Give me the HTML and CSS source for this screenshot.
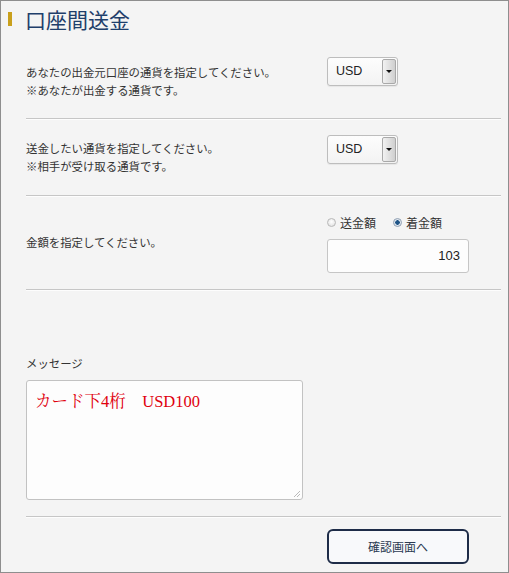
FILE: index.html
```html
<!DOCTYPE html>
<html lang="ja">
<head>
<meta charset="utf-8">
<title>口座間送金</title>
<link rel="stylesheet" href="styles.css">
</head>
<body>
<div class="page">
  <h1 class="title">口座間送金</h1>
  <div class="content">
    <section class="row row-from">
      <div class="label">あなたの出金元口座の通貨を指定してください。<br>※あなたが出金する通貨です。</div>
      <div class="select"><span class="select-value">USD</span><span class="select-arrow"><span class="tri"></span></span></div>
    </section>
    <section class="row row-to">
      <div class="label">送金したい通貨を指定してください。<br>※相手が受け取る通貨です。</div>
      <div class="select"><span class="select-value">USD</span><span class="select-arrow"><span class="tri"></span></span></div>
    </section>
    <section class="row row-amount">
      <div class="label">金額を指定してください。</div>
      <div class="amount">
        <div class="radios">
          <span class="radio"><span class="radio-dot"></span>送金額</span>
          <span class="radio"><span class="radio-dot is-checked"></span>着金額</span>
        </div>
        <div class="amount-input">103</div>
      </div>
    </section>
    <section class="row row-message">
      <div class="message-label">メッセージ</div>
      <div class="textarea">カード下4桁　USD100<span class="grip"></span></div>
    </section>
    <div class="actions">
      <button class="btn" type="button">確認画面へ</button>
    </div>
  </div>
</div>
</body>
</html>
```
FILE: styles.css
```css
* { box-sizing: border-box; }
html, body { margin: 0; padding: 0; }
body { background: #f4f4f4; }

.page {
  width: 509px;
  height: 573px;
  border: 1px solid #8e8e8e;
  background: #f4f4f4;
  font-family: "Noto Sans CJK JP", "Noto Sans", sans-serif;
  font-size: 11.4px;
  color: #333;
  overflow: hidden;
}

.title {
  display: flex;
  align-items: center;
  height: 39px;
  margin: 0;
  padding-bottom: 4px;
  font-size: 21px;
  font-weight: normal;
  color: #1f3f6b;
  line-height: 24px;
}
.title::before {
  content: "";
  width: 4px;
  height: 14px;
  margin: 0 13px 0 7px;
  background: #c9a01c;
}

.content {
  padding: 0 7px 0 25px;
}

.row {
  display: flex;
  align-items: flex-start;
  border-bottom: 1px solid #c6c6c6;
  box-shadow: 0 1px 0 #fdfdfd;
}
.label {
  width: 301px;
  line-height: 18px;
}

.row-from { height: 79px; padding-top: 17px; }
.row-from .label { margin-top: 6px; }
.row-to { height: 77px; padding-top: 16px; }
.row-to .label { margin-top: 4px; }

.select {
  display: flex;
  width: 71px;
  height: 29px;
  border: 1px solid #bdbdbd;
  border-radius: 3px;
  background: linear-gradient(#fdfdfd, #f3f3f3);
  box-shadow: 0 1px 1px rgba(0,0,0,0.06);
}
.select-value {
  flex: 1;
  padding-left: 8px;
  font-family: "Liberation Sans", sans-serif;
  font-size: 12.5px;
  line-height: 27px;
  color: #222;
}
.select-arrow {
  display: flex;
  align-items: center;
  justify-content: center;
  width: 14px;
  margin: 1px 1px 1px 0;
  border: 1px solid #a9a9a9;
  border-radius: 2px;
  background: linear-gradient(to right, #f2f2f2, #cfcfcf);
}
.tri {
  width: 0;
  height: 0;
  border-left: 3px solid transparent;
  border-right: 3px solid transparent;
  border-top: 3px solid #111;
}

.row-amount { height: 94px; padding-top: 18px; }
.row-amount .label { margin-top: 19px; }
.amount { width: 142px; }
.radios {
  display: flex;
  gap: 17px;
  height: 16px;
  align-items: center;
  margin-bottom: 9px;
  font-size: 12px;
}
.radio { display: flex; align-items: center; gap: 4px; }
.radio-dot {
  width: 9px;
  height: 9px;
  border-radius: 50%;
  border: 1px solid #b8b8b8;
  background: radial-gradient(circle at 50% 40%, #ffffff, #dcdcdc);
}
.radio-dot.is-checked {
  border-color: #8f9fb2;
  background: radial-gradient(circle, #1f5486 0 2px, #dfe6ee 2.5px);
}
.amount-input {
  height: 34px;
  border: 1px solid #c6c6c6;
  border-radius: 3px;
  background: #fdfdfd;
  padding-right: 8px;
  text-align: right;
  font-family: "Liberation Sans", sans-serif;
  font-size: 13px;
  line-height: 32px;
  color: #222;
}

.row-message {
  display: block;
  height: 227px;
  padding-top: 64px;
}
.message-label { line-height: 18px; }
.textarea {
  position: relative;
  width: 277px;
  height: 120px;
  margin-top: 8px;
  border: 1px solid #c2c2c2;
  border-radius: 3px;
  background: #fdfdfd;
  padding: 10px 0 0 8px;
  font-family: "Liberation Serif", "Noto Serif CJK JP", "Noto Sans CJK JP", serif;
  font-size: 16.5px;
  line-height: 22px;
  color: #e0000e;
}
.grip {
  position: absolute;
  right: 2px;
  bottom: 2px;
  width: 6px;
  height: 6px;
  background: linear-gradient(135deg, transparent 45%, #bbb 45% 55%, transparent 55% 70%, #bbb 70% 80%, transparent 80%);
}

.actions {
  padding-top: 12px;
  padding-left: 301px;
}
.btn {
  display: block;
  width: 142px;
  height: 35px;
  border: 2px solid #1e2c48;
  border-radius: 6px;
  background: #f8f9fb;
  font-family: "Noto Sans CJK JP", sans-serif;
  font-size: 12px;
  color: #2b3a52;
  padding: 0;
}
```
